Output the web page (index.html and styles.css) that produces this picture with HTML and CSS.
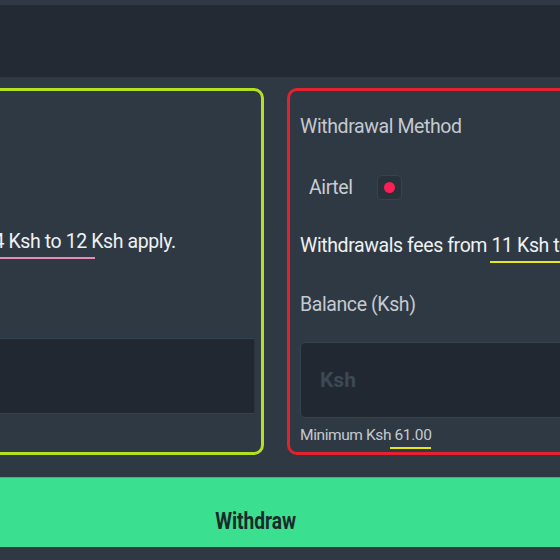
FILE: index.html
```html
<!DOCTYPE html>
<html lang="en">
<head>
    <meta charset="UTF-8">
    <meta name="viewport" content="width=device-width, initial-scale=1.0">
    <title>Withdraw</title>
    <link rel="stylesheet" href="styles.css">
</head>
<body>
<header class="topbar"></header>

<div class="cards">
    <!-- M-Pesa card (selected) -->
    <section class="card card-mpesa">
        <div class="label">Withdrawal Method</div>
        <div class="method-row">
            <span class="method-name">M-Pesa</span>
        </div>
        <p class="fees">Withdrawals fees from <span class="hl hl-pink">4 Ksh to 12</span> Ksh apply.</p>
        <div class="label">Balance (Ksh)</div>
        <div class="amount-input amount-flat"></div>
        <div class="minimum">&nbsp;</div>
    </section>

    <!-- Airtel card -->
    <section class="card card-airtel">
        <div class="label">Withdrawal Method</div>
        <div class="method-row">
            <span class="method-name">Airtel</span>
            <span class="radio"><span class="radio-dot"></span></span>
        </div>
        <p class="fees">Withdrawals fees from <span class="hl hl-yellow">11 Ksh to 22</span> Ksh apply.</p>
        <div class="label">Balance (Ksh)</div>
        <div class="amount-input"><span class="placeholder">Ksh</span></div>
        <div class="minimum">Minimum Ksh <span class="hl hl-yellow hl-small">61.00</span></div>
    </section>
</div>

<button class="withdraw-btn"><span class="btn-label">Withdraw</span></button>
</body>
</html>
```

FILE: styles.css
```css
/* Base */
html, body {
    margin: 0;
    padding: 0;
}

body {
    background: #2f3943;
    font-family: Roboto, "Noto Sans", sans-serif;
    color: #c6ccd2;
    overflow: hidden;
    height: 560px;
}

.topbar {
    margin-top: 5px;
    height: 72px;
    background: #232a33;
}

/* Cards */
.cards {
    display: grid;
    grid-template-columns: 475px 465px;
    gap: 23px;
    margin: 11px 0 0 -211px;
}

.card {
    border: 3px solid;
    border-radius: 10px;
    padding: 24px 10px 8px 10px;
    height: 329px;
    overflow: hidden;
}

.card-mpesa {
    border-color: #b2e023;
    padding-top: 20px;
    padding-bottom: 12px;
}

.card-airtel {
    border-color: #e3212f;
}

.label {
    font-size: 19.5px;
    letter-spacing: -0.4px;
    line-height: 24px;
    color: #c4cad0;
}

.method-row {
    display: flex;
    align-items: center;
    gap: 24px;
    height: 25px;
    margin: 36px 0 34px;
    padding-left: 9px;
}

.method-name {
    font-size: 19.5px;
    letter-spacing: -0.4px;
    color: #c8cdd2;
}

.radio {
    width: 23px;
    height: 23px;
    border: 1px solid #39434e;
    border-radius: 5px;
    background: #29313b;
    display: flex;
    align-items: center;
    justify-content: center;
}

.radio-dot {
    width: 11px;
    height: 11px;
    border-radius: 50%;
    background: #ff1d55;
}

.fees {
    margin: 0 0 35px;
    font-size: 19.5px;
    letter-spacing: -0.4px;
    line-height: 24px;
    color: #eef1f4;
    white-space: nowrap;
}

.hl {
    position: relative;
}

.hl::after {
    content: '';
    position: absolute;
    left: -2px;
    right: -8px;
    bottom: -6px;
    height: 2px;
}

.hl-pink::after {
    background: #e58bb4;
}

.hl-yellow::after {
    background: #e9e51b;
}

.hl-small::after {
    left: -5px;
    right: 0;
    bottom: -5px;
}

.amount-input {
    margin-top: 25px;
    height: 74px;
    border: 1px solid #37424e;
    border-radius: 5px;
    background: #222831;
    display: flex;
    align-items: center;
    padding-left: 19px;
}

.amount-flat {
    border-radius: 0;
    border-color: #354455 #2c3540;
    margin-right: -4px;
}

.placeholder {
    font-size: 21px;
    font-weight: 700;
    color: #3b4956;
}

.minimum {
    margin-top: 7px;
    font-size: 15.5px;
    letter-spacing: -0.4px;
    line-height: 20px;
    color: #c4cad0;
}

/* Button */
.withdraw-btn {
    display: block;
    width: 100%;
    height: 70px;
    margin-top: 22px;
    padding: 16px 48px 0 0;
    border: none;
    border-top: 1px solid #32b879;
    background: #3ae08f;
    color: #1b2a2b;
    font-family: Roboto, sans-serif;
    font-weight: 700;
    font-size: 24px;
    cursor: pointer;
}

.btn-label {
    display: inline-block;
    transform: scaleX(0.8);
}
```
